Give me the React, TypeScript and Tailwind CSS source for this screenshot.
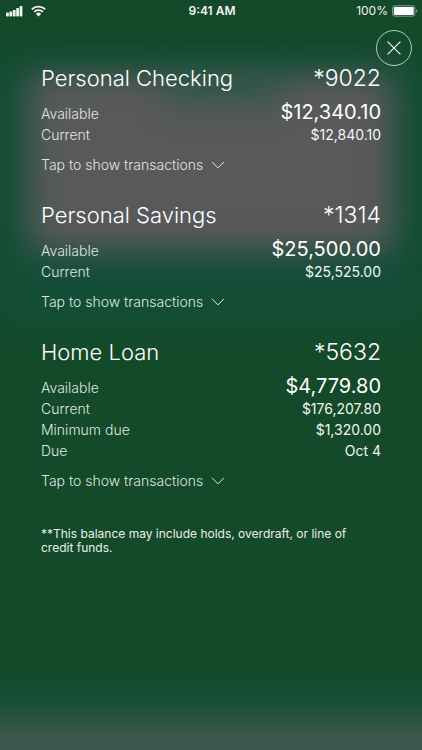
import React from "react";

type Row = { label: string; value: string };

type Account = {
    name: string;
    number: string;
    rows: Row[];
};

const accounts: Account[] = [
    {
        name: "Personal Checking",
        number: "*9022",
        rows: [
            { label: "Available", value: "$12,340.10" },
            { label: "Current", value: "$12,840.10" },
        ],
    },
    {
        name: "Personal Savings",
        number: "*1314",
        rows: [
            { label: "Available", value: "$25,500.00" },
            { label: "Current", value: "$25,525.00" },
        ],
    },
    {
        name: "Home Loan",
        number: "*5632",
        rows: [
            { label: "Available", value: "$4,779.80" },
            { label: "Current", value: "$176,207.80" },
            { label: "Minimum due", value: "$1,320.00" },
            { label: "Due", value: "Oct 4" },
        ],
    },
];

const StatusBar: React.FC = () => (
    <header className="grid h-[22px] grid-cols-3 items-center pr-1 pl-1.5 text-[#f0f6f2]">
        <div className="flex items-center gap-2">
            <svg className="h-3 w-[17px]" viewBox="0 0 17 12" fill="currentColor" aria-label="Signal">
                <rect x="0" y="7.6" width="2.8" height="3.9" rx="0.7" />
                <rect x="3.4" y="6.4" width="2.8" height="5.1" rx="0.7" />
                <rect x="6.8" y="4.9" width="2.8" height="6.6" rx="0.7" />
                <rect x="10.2" y="3.1" width="2.8" height="8.4" rx="0.7" />
                <rect x="13.6" y="1.1" width="2.8" height="10.4" rx="0.7" />
            </svg>
            <svg className="h-3 w-[15px]" viewBox="0 0 15 12" aria-label="Wi-Fi">
                <g fill="none" stroke="currentColor" strokeWidth="1.9">
                    <path d="M0.9 4.3a9.4 9.4 0 0 1 13.2 0" />
                    <path d="M3.2 6.9a6.1 6.1 0 0 1 8.6 0" />
                </g>
                <path d="M7.5 11.4 4.9 8.9a3.7 3.7 0 0 1 5.2 0Z" fill="currentColor" />
            </svg>
        </div>
        <time className="text-center text-xs font-semibold">9:41 AM</time>
        <div className="flex items-center justify-end gap-1">
            <span className="text-xs">100%</span>
            <svg className="h-3 w-[26px]" viewBox="0 0 26 12" fill="none" aria-label="Battery">
                <rect x="0.5" y="0.8" width="22.4" height="10.4" rx="2.4" stroke="currentColor" strokeOpacity="0.5" />
                <rect x="1.8" y="2" width="19.9" height="8" rx="1.2" fill="#fff" />
                <path d="M24.2 4.3v3.5c.8-.3 1.2-1 1.2-1.75s-.4-1.45-1.2-1.75Z" fill="currentColor" fillOpacity="0.5" />
            </svg>
        </div>
    </header>
);

const AccountSection: React.FC<{ account: Account }> = ({ account }) => (
    <section>
        <div className="flex items-baseline justify-between leading-8 font-light text-white">
            <h2 className="text-[22px]">{account.name}</h2>
            <span className="text-[23px]">{account.number}</span>
        </div>
        <dl className="mt-1.5 flex flex-col gap-px text-sm leading-5">
            {account.rows.map((row, index) => (
                <div key={row.label} className="flex items-baseline justify-between">
                    <dt className="font-light text-[#dfe6e2]">{row.label}</dt>
                    <dd className={index === 0 ? "text-xl leading-6 text-white" : "text-[#f0f6f2]"}>
                        {row.value}
                    </dd>
                </div>
            ))}
        </dl>
        <button
            type="button"
            className="mt-2 flex h-6 items-center gap-2 text-sm font-light text-[#dfe6e2]"
        >
            Tap to show transactions
            <svg className="h-2 w-[14px]" viewBox="0 0 14 8" fill="none" stroke="currentColor" aria-hidden="true">
                <path d="M1 0.8 7 6.9 13 0.8" strokeWidth="1" />
            </svg>
        </button>
    </section>
);

// Blurred content showing through behind the sheet
const Backdrop: React.FC = () => (
    <div className="absolute inset-0 -z-10 overflow-hidden bg-[#144a29]" aria-hidden="true">
        <div className="absolute -inset-x-2 top-14 h-[270px] bg-[#144e38] blur-[18px]" />
        <div className="absolute inset-x-7 top-[74px] h-[176px] rounded-xl bg-[#59595b] blur-[16px]" />
        <div className="absolute top-[66px] left-[38%] h-[42px] w-[30%] rounded-full bg-[#1d5540]/50 blur-[14px]" />
        <div className="absolute inset-x-0 bottom-0 h-[84px] bg-linear-to-b from-[#144a29] via-[#144e38] via-40% to-[#3e584d] to-90%" />
    </div>
);

const App: React.FC = () => (
    <div className="relative isolate flex min-h-screen flex-col font-['Inter',sans-serif]">
        <Backdrop />
        <StatusBar />
        <button
            type="button"
            aria-label="Close"
            className="mt-2 mr-2.5 flex size-9 items-center justify-center self-end rounded-full border border-white/70 text-white"
        >
            <svg className="size-[14px]" viewBox="0 0 14 14" fill="none" stroke="currentColor" aria-hidden="true">
                <path d="M0.6 0.6 13.4 13.4M13.4 0.6 0.6 13.4" strokeWidth="1.1" />
            </svg>
        </button>
        <main className="-mt-1 flex flex-col gap-[22px] px-[41px]">
            {accounts.map((account) => (
                <AccountSection key={account.name} account={account} />
            ))}
            <p className="mt-3 text-xs leading-[14px] text-[#e8f0eb]">
                **This balance may include holds, overdraft, or line of credit funds.
            </p>
        </main>
    </div>
);

export default App;
